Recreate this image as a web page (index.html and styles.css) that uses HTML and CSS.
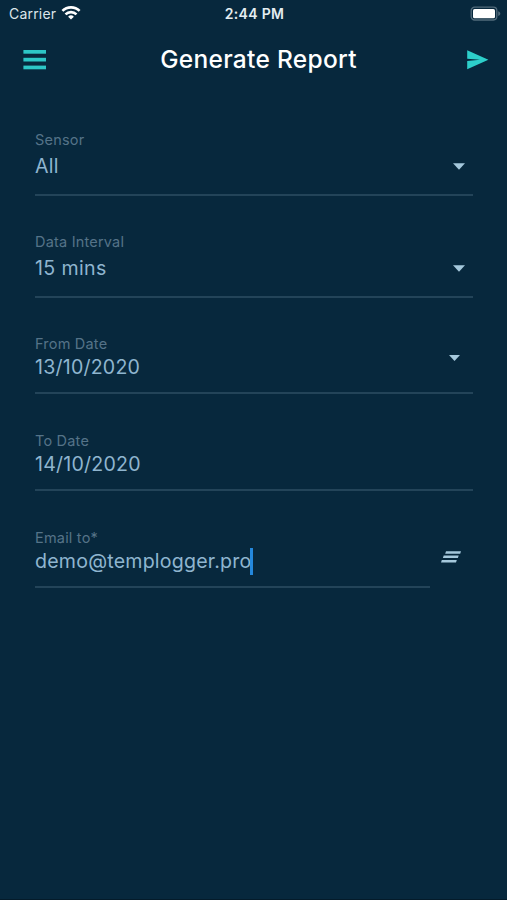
FILE: index.html
```html
<!DOCTYPE html>
<html lang="en">
<head>
<meta charset="utf-8">
<title>Generate Report</title>
<link rel="stylesheet" href="styles.css">
</head>
<body>
<div class="screen">
  <div class="status">
    <div class="carrier"><span>Carrier</span>
      <svg class="wifi" width="20" height="16" viewBox="0 0 20 16" fill="none" stroke="#fff" stroke-width="2.6"><path d="M1.4 5.9a12.2 12.2 0 0 1 17.2 0"/><path d="M4.5 9.4a7.8 7.8 0 0 1 11 0"/><path d="M10 14.6l-2.9-2.9a4.1 4.1 0 0 1 5.8 0z" fill="#fff" stroke="none"/></svg>
    </div>
    <span class="time">2:44 PM</span>
    <svg class="battery" width="31" height="16" viewBox="0 0 31 16"><rect x="1.2" y="1.2" width="25.6" height="12.8" rx="3.4" fill="none" stroke="#526b7b" stroke-width="1.3"/><rect x="3" y="3" width="22" height="9.3" rx="1.6" fill="#fff"/><path d="M28.2 5.3c2.8 1.2 2.8 3.6 0 4.8z" fill="#526b7b"/></svg>
  </div>
  <header class="bar">
    <svg class="menu" width="24" height="22" viewBox="0 0 24 22" fill="#2dc6c6"><rect x=".4" y="1" width="22.6" height="3.7"/><rect x=".4" y="8.8" width="22.6" height="3.7"/><rect x=".4" y="16.6" width="22.6" height="3.7"/></svg>
    <h1>Generate Report</h1>
    <svg class="send" width="22" height="20" viewBox="0 0 22 20" fill="#2dcfca"><path d="M.2.3 21.4 9.800.2 19.300V10.900L13 9.800.2 8.700z"/></svg>
  </header>
  <main class="form">
    <div class="field select">
      <div class="text"><label>Sensor</label><span class="value">All</span></div>
      <svg class="arrow" width="12" height="7" viewBox="0 0 12 7"><path d="M0 .2h12L6 6.8z"/></svg>
    </div>
    <div class="field select interval">
      <div class="text"><label>Data Interval</label><span class="value v-mins">15 mins</span></div>
      <svg class="arrow" width="12" height="7" viewBox="0 0 12 7"><path d="M0 .2h12L6 6.8z"/></svg>
    </div>
    <div class="field date">
      <div class="text"><label>From Date</label><span class="value">13/10/2020</span></div>
      <svg class="arrow small" width="11" height="6" viewBox="0 0 11 6"><path d="M0 0h11L5.500 6z"/></svg>
    </div>
    <div class="field date to">
      <div class="text"><label>To Date</label><span class="value">14/10/2020</span></div>
    </div>
    <div class="email-row">
      <div class="field date email">
        <div class="text"><label>Email to*</label><span class="value v-mail">demo@templogger.pro<i class="caret"></i></span></div>
      </div>
      <svg class="clear" width="20" height="12" viewBox="0 0 20 12" fill="#a5c8dc"><path d="M5 .3h15l-.8 2.500H4.200zM2.700 4.600h15l-.8 2.500h-15zM.8 8.900h15l-.8 2.500H0z"/></svg>
    </div>
  </main>
</div>
</body>
</html>
```
FILE: styles.css
```css
* { box-sizing: border-box; }
body {
  margin: 0;
  background: #07283d;
  font-family: Inter, "Liberation Sans", sans-serif;
}
.screen { height: 900px; overflow: hidden; border-bottom: 1px solid #041b2a; }
.status {
  height: 28px;
  display: grid;
  grid-template-columns: 1fr auto 1fr;
  align-items: center;
  padding: 0 7px 0 9px;
  color: #dce5ea;
  font-size: 14px;
}
.carrier { display: flex; align-items: center; gap: 5px; letter-spacing: .2px; }
.carrier span, .time { padding-bottom: 2px; }
.wifi { margin-top: -3px; }
.time { font-weight: 600; font-size: 14px; letter-spacing: .3px; color: #e4edf1; }
.battery { justify-self: end; margin: -1px -1px 0 0; }
.bar {
  height: 64px;
  display: grid;
  grid-template-columns: 1fr auto 1fr;
  align-items: center;
  padding: 0 18px 0 28px;
}
.menu { margin-left: -5px; }
.bar h1 {
  margin: 0 -4px 0 0;
  padding: 0 4px 2px 0;
  color: #fff;
  font-size: 24.500px;
  line-height: 30px;
  font-weight: 500;
  letter-spacing: .3px;
}
.send { justify-self: end; margin-top: -1px; }
.form { padding: 39px 34px 0 35px; }
.field {
  display: flex;
  justify-content: space-between;
  border-bottom: 2px solid #234459;
}
.text { display: flex; flex-direction: column; }
label { color: #557388; font-size: 14.500px; line-height: 17px; letter-spacing: .2px; }
.value {
  color: #8fb5cf;
  font-size: 19.600px;
  line-height: 24px;
  margin-top: 3px;
  letter-spacing: .2px;
}
.select { height: 65px; }
.select .value { margin-top: 6px; }
.select .v-mins { letter-spacing: .35px; }
.interval { margin-top: 37px; }
.date { height: 59px; margin-top: 37px; }
.to, .email { margin-top: 38px; }
.arrow { fill: #a5c8dc; margin: 32px 8px 0 0; }
.arrow.small { margin: 20px 13px 0 0; }
.email-row { display: flex; justify-content: space-between; }
.email { width: 395px; }
.clear { margin: 60px 12px 0 0; }
.v-mail { display: flex; align-items: center; }
.caret { width: 2.500px; height: 27px; margin: -2px 0 -2px -1px; background: #2488dc; }
```
